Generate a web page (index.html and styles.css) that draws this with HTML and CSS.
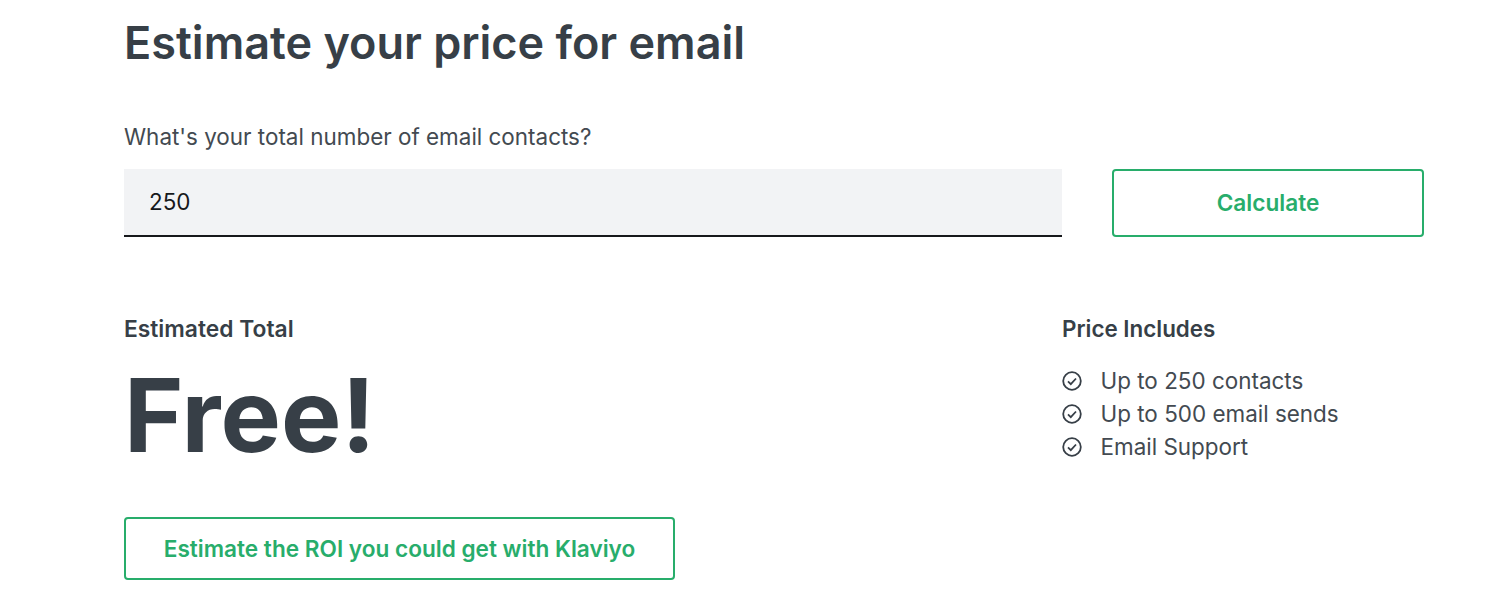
FILE: index.html
```html
<!DOCTYPE html>
<html lang="en">
<head>
<meta charset="utf-8">
<title>Estimate your price for email</title>
<link rel="stylesheet" href="styles.css">
</head>
<body>
<main class="page">
  <h1 class="title">Estimate your price for email</h1>
  <label class="question" for="contacts">What's your total number of email contacts?</label>
  <div class="input-row">
    <input id="contacts" class="contacts" type="text" value="250">
    <button class="btn btn-calc" type="button">Calculate</button>
  </div>
  <div class="results">
    <div class="total">
      <div class="subhead subhead-total">Estimated Total</div>
      <div class="price">Free!</div>
      <a class="btn btn-roi" href="#">Estimate the ROI you could get with Klaviyo</a>
    </div>
    <div class="includes">
      <div class="subhead">Price Includes</div>
      <ul class="features">
        <li><svg class="check" viewBox="0 0 20 20"><circle cx="10" cy="10" r="8.8"/><path d="M6 10.3l2.8 2.8 5.2-5.6"/></svg>Up to 250 contacts</li>
        <li><svg class="check" viewBox="0 0 20 20"><circle cx="10" cy="10" r="8.8"/><path d="M6 10.3l2.8 2.8 5.2-5.6"/></svg>Up to 500 email sends</li>
        <li><svg class="check" viewBox="0 0 20 20"><circle cx="10" cy="10" r="8.8"/><path d="M6 10.3l2.8 2.8 5.2-5.6"/></svg>Email Support</li>
      </ul>
    </div>
  </div>
</main>
</body>
</html>
```
FILE: styles.css
```css
* { box-sizing: border-box; }
html, body { margin: 0; height: 605px; overflow: hidden; background: #fff; }
body { font-family: Inter, "Liberation Sans", sans-serif; color: #373f47; }
.page { padding: 15px 88px 0 124px; display: flex; flex-direction: column; }
.title { margin: 0; font-size: 45px; line-height: 56px; font-weight: 600; }
.question { margin-top: 51px; font-size: 22.45px; line-height: 30px; font-weight: 400; color: #434a51; }
.input-row { display: flex; margin-top: 17px; gap: 50px; }
.contacts { width: 938px; height: 68px; border: 0; border-bottom: 2px solid #16181b; background: #f2f3f5; padding: 0 25px 2px; font: 400 22.4px Inter, sans-serif; color: #16181b; outline: 0; border-radius: 0; }
.btn { display: flex; align-items: center; justify-content: center; background: #fff; border: 2px solid #28ad6b; border-radius: 4px; color: #28ad6b; font: 600 22.6px Inter, sans-serif; text-decoration: none; }
.btn-calc { width: 312px; height: 68px; padding-bottom: 2px; }
.results { display: flex; margin-top: 77px; }
.total { width: 938px; }
.subhead { font-size: 22.4px; line-height: 30px; font-weight: 600; }
.subhead-total { font-size: 22.8px; }
.price { font-size: 101.5px; line-height: 130px; font-weight: 700; margin-top: 6px; }
.btn-roi { width: 551px; height: 63px; margin-top: 37px; }
.features { list-style: none; margin: 20px 0 0; padding: 0; }
.features li { display: flex; align-items: center; gap: 19px; font-size: 22.45px; line-height: 33px; color: #434a51; }
.check { width: 20px; height: 20px; fill: none; stroke: #373f47; stroke-width: 1.8; margin-left: -0.5px; }
```
